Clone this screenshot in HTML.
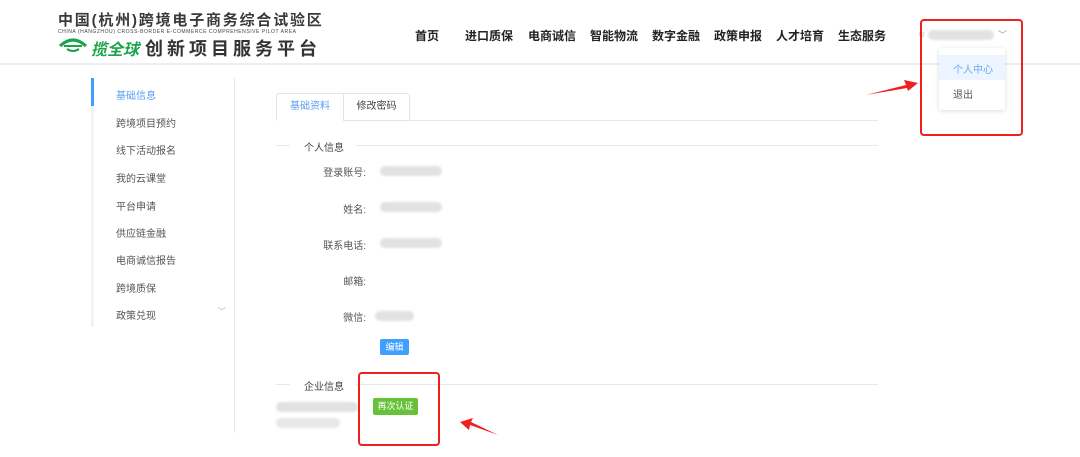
<!DOCTYPE html>
<html><head><meta charset="utf-8"><style>
*{margin:0;padding:0;box-sizing:border-box}
body{width:1080px;height:457px;background:#fff;position:relative;overflow:hidden;font-family:"Liberation Sans","Noto Sans CJK SC",sans-serif;color:#333}
.a{position:absolute;white-space:nowrap}
.nav{top:27px;font-size:12px;font-weight:bold;color:#222}
.side{left:116px;font-size:10px;color:#555}
.lab{font-size:10px;color:#555;text-align:right;width:90px;left:276px}
.blur{position:absolute;height:10px;border-radius:5px;background:#e2e2e4;filter:blur(1px)}
.hl{position:absolute;height:1px;background:#e8e8e8}
</style></head><body>
<div class="a" style="left:58px;top:9px;font-size:15px;color:#3a3a3a;letter-spacing:1.8px;font-weight:600">中国(杭州)跨境电子商务综合试验区</div>
<div class="a" style="left:58px;top:29px;font-size:5px;color:#444;letter-spacing:0.55px">CHINA (HANGZHOU) CROSS-BORDER E-COMMERCE COMPREHENSIVE PILOT AREA</div>
<svg class="a" style="left:58px;top:36px" width="30" height="18" viewBox="0 0 30 18"><path d="M2 10 Q15 -2 28 10" stroke="#1aa34a" stroke-width="3" fill="none"/><path d="M6 10 H24" stroke="#1aa34a" stroke-width="2"/><path d="M9 13 Q15 17 21 13" stroke="#1aa34a" stroke-width="2" fill="none"/></svg>
<div class="a" style="left:91px;top:36px;font-size:16px;font-weight:bold;font-style:italic;color:#1aa34a">揽全球</div>
<div class="a" style="left:145px;top:35px;font-size:18px;font-weight:bold;color:#333;letter-spacing:4px">创新项目服务平台</div>
<div class="a nav" style="left:415px">首页</div>
<div class="a nav" style="left:465px">进口质保</div>
<div class="a nav" style="left:528px">电商诚信</div>
<div class="a nav" style="left:590px">智能物流</div>
<div class="a nav" style="left:652px">数字金融</div>
<div class="a nav" style="left:714px">政策申报</div>
<div class="a nav" style="left:776px">人才培育</div>
<div class="a nav" style="left:838px">生态服务</div>
<div class="a" style="left:917px;top:29px;font-size:9px;color:#aaa">☺</div>
<div class="blur" style="left:928px;top:30px;width:66px"></div>
<div class="a" style="left:998px;top:28px;font-size:9px;color:#999">﹀</div>
<div class="hl" style="left:0;top:63px;width:1080px;height:2px;background:#eeeeee"></div>
<div class="a" style="left:939px;top:48px;width:66px;height:62px;background:#fff;box-shadow:0 1px 5px rgba(0,0,0,.15);border-radius:3px"></div>
<div class="a" style="left:939px;top:55px;width:66px;height:25px;background:#ecf5ff"></div>
<div class="a" style="left:953px;top:61px;font-size:10px;color:#66aaf0">个人中心</div>
<div class="a" style="left:953px;top:86px;font-size:10px;color:#555">退出</div>
<div class="a" style="left:920px;top:19px;width:103px;height:117px;border:2px solid #f02020;border-radius:4px"></div>
<svg class="a" style="left:864px;top:78px" width="56" height="20"><polygon points="2,17 42,7 40,2 54,5 44,13 43,10" fill="#f02020"/></svg>
<div class="a" style="left:91px;top:78px;width:3px;height:249px;background:#f2f3f5"></div>
<div class="a" style="left:91px;top:78px;width:3px;height:28px;background:#409eff"></div>
<div class="a" style="left:234px;top:78px;width:1px;height:355px;background:#e6e6e6"></div>
<div class="a side" style="top:87px;color:#5a9ff0">基础信息</div>
<div class="a side" style="top:115px">跨境项目预约</div>
<div class="a side" style="top:142px">线下活动报名</div>
<div class="a side" style="top:170px">我的云课堂</div>
<div class="a side" style="top:198px">平台申请</div>
<div class="a side" style="top:225px">供应链金融</div>
<div class="a side" style="top:252px">电商诚信报告</div>
<div class="a side" style="top:280px">跨境质保</div>
<div class="a side" style="top:307px">政策兑现</div>
<div class="a" style="left:218px;top:306px;font-size:8px;color:#aaa">﹀</div>
<div class="hl" style="left:276px;top:120px;width:602px"></div>
<div class="a" style="left:276px;top:93px;width:68px;height:28px;border:1px solid #e4e4e4;border-bottom:1px solid #fff;border-radius:3px 0 0 0;font-size:10px;color:#5a9ff0;text-align:center;line-height:26px">基础资料</div>
<div class="a" style="left:343px;top:93px;width:67px;height:28px;border:1px solid #e4e4e4;border-radius:0 3px 0 0;font-size:10px;color:#444;text-align:center;line-height:26px">修改密码</div>
<div class="hl" style="left:276px;top:145px;width:14px"></div>
<div class="a" style="left:304px;top:139px;font-size:10px;color:#444">个人信息</div>
<div class="hl" style="left:356px;top:145px;width:522px"></div>
<div class="a lab" style="top:164px">登录账号:</div><div class="blur" style="left:380px;top:166px;width:62px"></div>
<div class="a lab" style="top:201px">姓名:</div><div class="blur" style="left:380px;top:202px;width:62px"></div>
<div class="a lab" style="top:237px">联系电话:</div><div class="blur" style="left:380px;top:238px;width:62px"></div>
<div class="a lab" style="top:273px">邮箱:</div>
<div class="a lab" style="top:309px">微信:</div><div class="blur" style="left:375px;top:311px;width:39px"></div>
<div class="a" style="left:380px;top:339px;width:29px;height:16px;background:#409eff;border-radius:2px;color:#fff;font-size:9px;text-align:center;line-height:16px">编辑</div>
<div class="hl" style="left:276px;top:384px;width:14px"></div>
<div class="a" style="left:304px;top:378px;font-size:10px;color:#444">企业信息</div>
<div class="hl" style="left:356px;top:384px;width:522px"></div>
<div class="blur" style="left:276px;top:402px;width:82px"></div>
<div class="blur" style="left:276px;top:418px;width:64px;background:#e8e8ea"></div>
<div class="a" style="left:373px;top:398px;width:45px;height:17px;background:#67c23a;border-radius:2px;color:#fff;font-size:9px;text-align:center;line-height:17px">再次认证</div>
<div class="a" style="left:358px;top:372px;width:82px;height:74px;border:2px solid #f02020;border-radius:4px"></div>
<svg class="a" style="left:458px;top:416px" width="42" height="22"><polygon points="40,19 12,9 11,14 2,6 15,2 13,6" fill="#f02020"/></svg>
</body></html>
